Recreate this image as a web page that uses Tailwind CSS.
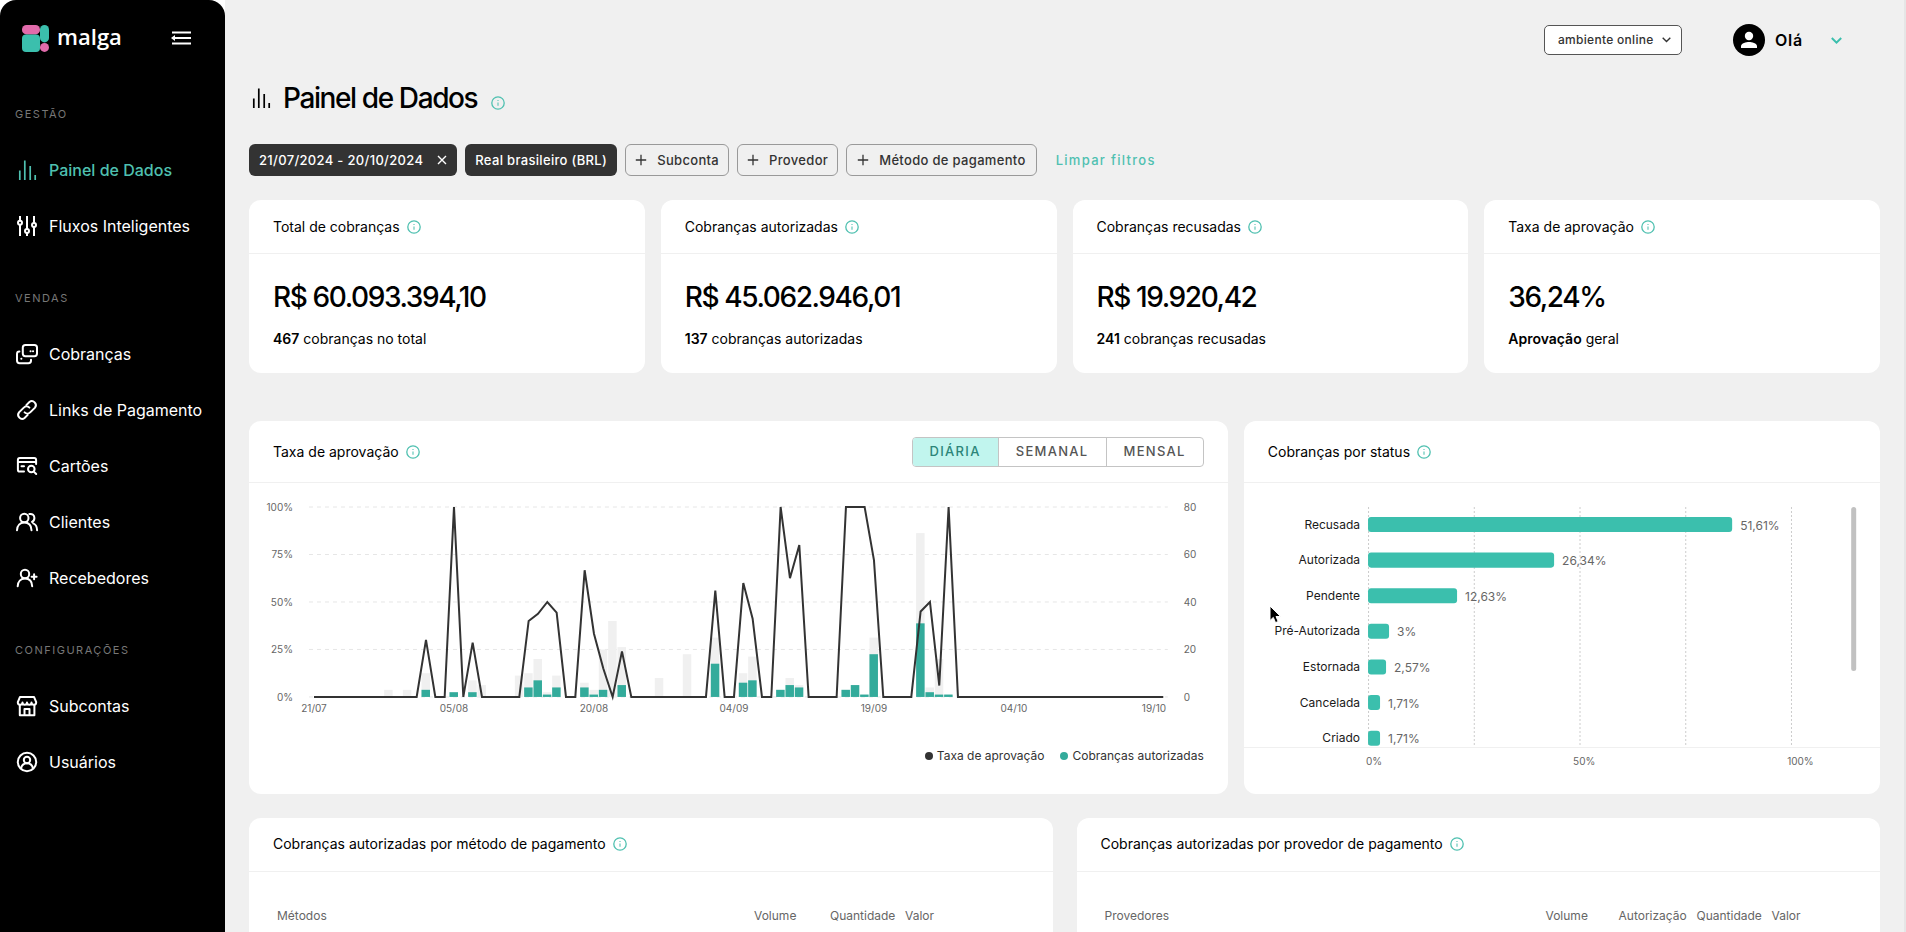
<!doctype html>
<html lang="pt-BR">
    <head>
        <meta charset="UTF-8" />
        <meta name="viewport" content="width=device-width, initial-scale=1.0" />
        <script src="https://cdn.jsdelivr.net/npm/@tailwindcss/browser@4"></script>
        <title>Painel de Dados - malga</title>
    </head>
    <body class="h-screen overflow-hidden bg-white font-['Inter',sans-serif] text-sm text-black flex">
        <!-- shared symbols -->
        <svg class="hidden">
            <symbol id="info" viewBox="0 0 14 14">
                <circle cx="7" cy="7" r="6.2" fill="none" stroke="currentColor" stroke-width="1.3" />
                <path d="M7 6.4v3.4M7 4v1.1" stroke="currentColor" stroke-width="1.3" opacity=".8" />
            </symbol>
            <symbol id="bars" viewBox="0 0 24 24">
                <path d="M4.8 12.5V22M9.8 2.5V22M15.2 8v14M20.2 17v5" stroke="currentColor" stroke-width="1.7" />
            </symbol>
            <symbol id="plus" viewBox="0 0 12 12">
                <path d="M6 .8v10.4M.8 6h10.4" stroke="currentColor" stroke-width="1.3" />
            </symbol>
        </svg>

        <aside class="w-[225px] shrink-0 bg-black text-white rounded-t-2xl px-[15px]">
            <div class="h-[86px] pt-5 flex items-start justify-between pl-[7px] pr-[18px]">
                <a href="#" class="flex items-center gap-2 h-9">
                    <svg class="size-[27px]" viewBox="0 0 27 27">
                        <rect width="18" height="9.4" rx="4.5" fill="#e16bab" />
                        <rect y="9.4" width="18" height="17.6" rx="4" fill="#3bbfad" />
                        <rect x="18" width="9" height="17.4" rx="4.5" fill="#3bbfad" />
                        <circle cx="22.5" cy="22.4" r="4.5" fill="#e16bab" />
                    </svg>
                    <span class="font-['Open_Sans',sans-serif] font-semibold text-[22px] leading-7 pb-1">malga</span>
                </a>
                <button aria-label="Recolher menu" class="h-9">
                    <svg class="w-[22px] h-[14px]" viewBox="0 0 22 14" fill="none" stroke="#fff" stroke-width="2">
                        <path d="M2 1.6h19M4 7h17M2 12.4h19" />
                        <path d="M5 4L1 7l4 3z" fill="#fff" stroke="none" />
                    </svg>
                </button>
            </div>

            <nav>
                <h2 class="h-14 pt-5 text-[11px] leading-4 tracking-[1.5px] text-[#777]">GESTÃO</h2>
                <a href="#" class="h-14 flex items-center gap-[10px] text-base font-medium text-[#4fc0b0]">
                    <svg class="size-6"><use href="#bars" /></svg>
                    Painel de Dados
                </a>
                <a href="#" class="h-14 flex items-center gap-[10px] text-base">
                    <svg class="size-6" viewBox="0 0 24 24" fill="#000" stroke="#fff" stroke-width="2">
                        <path d="M5 2v20M12 2v20M19 2v20" />
                        <circle cx="5" cy="8.7" r="2" />
                        <circle cx="12" cy="17" r="2" />
                        <circle cx="19" cy="11" r="2" />
                    </svg>
                    Fluxos Inteligentes
                </a>

                <h2 class="h-[72px] pt-9 text-[11px] leading-4 tracking-[1.5px] text-[#777]">VENDAS</h2>
                <a href="#" class="h-14 flex items-center gap-[10px] text-base">
                    <svg class="size-6" viewBox="0 0 24 24" fill="none" stroke="#fff" stroke-width="2" stroke-linecap="round">
                        <rect x="7.8" y="2.9" width="14.2" height="11.3" rx="2.6" />
                        <path d="M4.4 9.6C2.8 9.6 2 10.4 2 12v6.6c0 1.7.9 2.6 2.6 2.6h8.8c1.6 0 2.6-.8 2.6-2.4v-1M15.5 9.3h.1M18 9.3h.1M6.3 16.8h.1" />
                    </svg>
                    Cobranças
                </a>
                <a href="#" class="h-14 flex items-center gap-[10px] text-base">
                    <svg class="size-6" viewBox="0 0 24 24" fill="none" stroke="#fff" stroke-width="2" stroke-linecap="round">
                        <path d="M9.6 14.4a4 4 0 0 0 5.6 0l4.8-4.8a4 4 0 0 0-5.6-5.6l-3.1 3.1" />
                        <path d="M14.4 9.6a4 4 0 0 0-5.6 0L4 14.4A4 4 0 0 0 9.6 20l3.1-3.1" />
                    </svg>
                    Links de Pagamento
                </a>
                <a href="#" class="h-14 flex items-center gap-[10px] text-base">
                    <svg class="size-6" viewBox="0 0 24 24" fill="none" stroke="#fff" stroke-width="2" stroke-linecap="round">
                        <path d="M9 17.6H4.8C3.6 17.6 2.9 16.9 2.9 15.7V6c0-1.2.7-2 1.9-2h14.4c1.2 0 1.9.8 1.9 2v4M3 8h18M6.5 12.2h2.5" />
                        <circle cx="16.3" cy="15" r="3.3" />
                        <path d="M18.8 17.6l2.4 2.4" />
                    </svg>
                    Cartões
                </a>
                <a href="#" class="h-14 flex items-center gap-[10px] text-base">
                    <svg class="size-6" viewBox="0 0 24 24" fill="none" stroke="#fff" stroke-width="2" stroke-linecap="round">
                        <circle cx="9.3" cy="8" r="4.2" />
                        <path d="M2 20.2c.2-4.6 3-7.6 7.3-7.6s7 3 7.2 7.6M14.3 4c3.2-.6 5.1 1.3 5.1 3.9 0 1.9-1 3.3-2.4 4M18.2 13.4c2.5 1 3.8 3.4 3.9 6.8" />
                    </svg>
                    Clientes
                </a>
                <a href="#" class="h-14 flex items-center gap-[10px] text-base">
                    <svg class="size-6" viewBox="0 0 24 24" fill="none" stroke="#fff" stroke-width="2" stroke-linecap="round">
                        <circle cx="10" cy="8" r="4.2" />
                        <path d="M2.7 20.2c.2-4.6 3-7.6 7.3-7.6s7 3 7.2 7.6M16.6 10.8h5M19.1 8.3v5" />
                    </svg>
                    Recebedores
                </a>

                <h2 class="h-[72px] pt-9 text-[11px] leading-4 tracking-[1.5px] text-[#777]">CONFIGURAÇÕES</h2>
                <a href="#" class="h-14 flex items-center gap-[10px] text-base">
                    <svg class="size-6" viewBox="0 0 24 24" fill="none" stroke="#fff" stroke-width="2" stroke-linejoin="round">
                        <path d="M4.8 10.5v10.7h14.6V10.5M9.5 21v-6h5v6" />
                        <path d="M5 2.9h14l2.2 5.3c0 1.6-1 2.5-2.4 2.5-1.3 0-2.2-.8-2.3-2.1-.1 1.3-1 2.1-2.2 2.1-1.3 0-2.2-.8-2.3-2.1-.1 1.3-1 2.1-2.3 2.1-1.2 0-2.1-.8-2.2-2.1-.1 1.3-1 2.1-2.3 2.1-1.4 0-2.4-.9-2.4-2.5z" />
                    </svg>
                    Subcontas
                </a>
                <a href="#" class="h-14 flex items-center gap-[10px] text-base">
                    <svg class="size-6" viewBox="0 0 24 24" fill="none" stroke="#fff" stroke-width="2">
                        <circle cx="12" cy="12" r="9.2" />
                        <circle cx="12" cy="10" r="3.2" />
                        <path d="M6 18.6c.6-3.4 2.9-5.4 6-5.4s5.4 2 6 5.4" />
                    </svg>
                    Usuários
                </a>
            </nav>
        </aside>

        <main class="flex-1 min-w-0 h-screen overflow-hidden bg-[#f0f0f0] border-r-2 border-[#e6e6e6] px-6 pt-6">
            <header class="h-8 flex items-center justify-end pr-[38px]">
                <div class="relative mr-[51px]">
                    <select
                        aria-label="Ambiente"
                        class="appearance-none block w-[138px] h-[30px] py-0 pl-[13px] rounded-[5px] border border-[#555] bg-white text-xs leading-5 font-medium tracking-wide text-[#333]"
                    >
                        <option>ambiente online</option>
                    </select>
                    <svg class="absolute right-[11px] top-3 w-[9px] h-[6px] pointer-events-none" viewBox="0 0 9 6" fill="none" stroke="#333" stroke-width="1.4">
                        <path d="M.7.8l3.8 3.8L8.3.8" />
                    </svg>
                </div>
                <button class="flex items-center">
                    <svg class="size-8 mr-[10px]" viewBox="0 0 32 32">
                        <circle cx="16" cy="16" r="16" />
                        <circle cx="16" cy="12" r="4.2" fill="#fff" />
                        <path d="M8 24v-2c0-2.7 5.3-4.1 8-4.1s8 1.4 8 4.1v2z" fill="#fff" />
                    </svg>
                    <span class="text-base font-semibold tracking-wider mr-7">Olá</span>
                    <svg class="w-[11px] h-[7px]" viewBox="0 0 11 7" fill="none" stroke="#3bbfad" stroke-width="2">
                        <path d="M.8 1l4.7 4.6L10.2 1" />
                    </svg>
                </button>
            </header>

            <div class="mt-6 h-9 flex items-center">
                <svg class="size-6 mr-[10px]"><use href="#bars" /></svg>
                <h1 class="text-[28px] leading-9 font-medium tracking-tighter">Painel de Dados</h1>
                <svg class="size-[14px] ml-[14px] mt-[10px] text-[#4fc0b0]"><use href="#info" /></svg>
            </div>

            <div class="mt-7 h-8 flex items-stretch gap-2 text-[13px] font-medium tracking-wide text-[#333]">
                <button class="flex items-center rounded-md bg-[#333] text-white px-[10px]">
                    21/07/2024 - 20/10/2024
                    <svg class="size-[10px] ml-[14px]" viewBox="0 0 10 10" stroke="#fff" stroke-width="1.4">
                        <path d="M1 1l8 8M9 1l-8 8" />
                    </svg>
                </button>
                <button class="rounded-md bg-[#333] text-white px-[10px]">Real brasileiro (BRL)</button>
                <button class="flex items-center gap-[10px] rounded-md border border-[#999] px-[9px]">
                    <svg class="size-3"><use href="#plus" /></svg>
                    Subconta
                </button>
                <button class="flex items-center gap-[10px] rounded-md border border-[#999] px-[9px]">
                    <svg class="size-3"><use href="#plus" /></svg>
                    Provedor
                </button>
                <button class="flex items-center gap-[10px] rounded-md border border-[#999] px-[10px]">
                    <svg class="size-3"><use href="#plus" /></svg>
                    Método de pagamento
                </button>
                <button class="px-[11px] tracking-widest text-[#4fc0b0]">Limpar filtros</button>
            </div>

            <section class="mt-6 grid grid-cols-4 gap-4">
                <article class="rounded-xl bg-white">
                    <header class="h-[54px] px-6 flex items-center gap-[7px] border-b border-[#f0f0f0]">
                        <h2>Total de cobranças</h2>
                        <svg class="size-[14px] text-[#4fc0b0]"><use href="#info" /></svg>
                    </header>
                    <div class="p-6">
                        <p class="text-[28px] leading-[39px] font-medium tracking-tighter">R$ 60.093.394,10</p>
                        <p class="mt-3 leading-5"><b class="font-semibold">467</b> cobranças no total</p>
                    </div>
                </article>
                <article class="rounded-xl bg-white">
                    <header class="h-[54px] px-6 flex items-center gap-[7px] border-b border-[#f0f0f0]">
                        <h2>Cobranças autorizadas</h2>
                        <svg class="size-[14px] text-[#4fc0b0]"><use href="#info" /></svg>
                    </header>
                    <div class="p-6">
                        <p class="text-[28px] leading-[39px] font-medium tracking-tighter">R$ 45.062.946,01</p>
                        <p class="mt-3 leading-5"><b class="font-semibold">137</b> cobranças autorizadas</p>
                    </div>
                </article>
                <article class="rounded-xl bg-white">
                    <header class="h-[54px] px-6 flex items-center gap-[7px] border-b border-[#f0f0f0]">
                        <h2>Cobranças recusadas</h2>
                        <svg class="size-[14px] text-[#4fc0b0]"><use href="#info" /></svg>
                    </header>
                    <div class="p-6">
                        <p class="text-[28px] leading-[39px] font-medium tracking-tighter">R$ 19.920,42</p>
                        <p class="mt-3 leading-5"><b class="font-semibold">241</b> cobranças recusadas</p>
                    </div>
                </article>
                <article class="rounded-xl bg-white">
                    <header class="h-[54px] px-6 flex items-center gap-[7px] border-b border-[#f0f0f0]">
                        <h2>Taxa de aprovação</h2>
                        <svg class="size-[14px] text-[#4fc0b0]"><use href="#info" /></svg>
                    </header>
                    <div class="p-6">
                        <p class="text-[28px] leading-[39px] font-medium tracking-tighter">36,24%</p>
                        <p class="mt-3 leading-5"><b class="font-semibold">Aprovação</b> geral</p>
                    </div>
                </article>
            </section>

            <section class="mt-12 grid grid-cols-[20fr_13fr] gap-4">
                <article class="rounded-xl bg-white">
                    <header class="h-[62px] px-6 flex items-center gap-[7px] border-b border-[#f0f0f0]">
                        <h2>Taxa de aprovação</h2>
                        <svg class="size-[14px] text-[#4fc0b0]"><use href="#info" /></svg>
                        <div class="ml-auto h-[30px] flex rounded border border-[#c4c4c4] overflow-hidden text-[13px] font-medium tracking-widest text-[#555]">
                            <button class="px-[17px] bg-[#c1f5ee] text-[#2c8579]">DIÁRIA</button>
                            <button class="px-[17px] border-l border-[#c4c4c4]">SEMANAL</button>
                            <button class="px-[17px] border-l border-[#c4c4c4]">MENSAL</button>
                        </div>
                    </header>
                    <svg id="approval" class="w-full h-auto" viewBox="0 0 979 253"></svg>
                    <div class="mt-2 pb-[26px] px-6 flex justify-end gap-4 text-xs leading-6 text-[#333]">
                        <span class="flex items-center gap-1"><i class="size-2 rounded-full bg-[#333]"></i>Taxa de aprovação</span>
                        <span class="flex items-center gap-1"><i class="size-2 rounded-full bg-[#33ab9b]"></i>Cobranças autorizadas</span>
                    </div>
                </article>

                <article class="relative rounded-xl bg-white">
                    <header class="h-[62px] px-6 flex items-center gap-[7px] border-b border-[#f0f0f0]">
                        <h2>Cobranças por status</h2>
                        <svg class="size-[14px] text-[#4fc0b0]"><use href="#info" /></svg>
                    </header>
                    <svg id="status" class="w-full h-auto" viewBox="0 0 636 310"></svg>
                    <!-- mouse pointer -->
                    <svg class="absolute left-[25px] top-[184px] w-[13px] h-[20px]" viewBox="0 0 13 20">
                        <path d="M1 1v14.5l3.3-3.1 2.2 5.2 2.7-1.1-2.2-5h4.6z" stroke="#fff" />
                    </svg>
                </article>
            </section>

            <section class="mt-6 grid grid-cols-2 gap-6">
                <article class="rounded-xl bg-white h-[300px]">
                    <header class="h-[54px] px-6 flex items-center gap-[7px] border-b border-[#f0f0f0]">
                        <h2>Cobranças autorizadas por método de pagamento</h2>
                        <svg class="size-[14px] text-[#4fc0b0]"><use href="#info" /></svg>
                    </header>
                    <table class="mt-8 ml-7 w-[680px] table-fixed text-xs text-[#666]">
                        <thead>
                            <tr class="h-6 text-left">
                                <th class="font-normal">Métodos</th>
                                <th class="font-normal w-[76px]">Volume</th>
                                <th class="font-normal w-[75px]">Quantidade</th>
                                <th class="font-normal w-[52px]">Valor</th>
                            </tr>
                        </thead>
                    </table>
                </article>
                <article class="rounded-xl bg-white h-[300px]">
                    <header class="h-[54px] px-6 flex items-center gap-[7px] border-b border-[#f0f0f0]">
                        <h2>Cobranças autorizadas por provedor de pagamento</h2>
                        <svg class="size-[14px] text-[#4fc0b0]"><use href="#info" /></svg>
                    </header>
                    <table class="mt-8 ml-7 w-[720px] table-fixed text-xs text-[#666]">
                        <thead>
                            <tr class="h-6 text-left">
                                <th class="font-normal">Provedores</th>
                                <th class="font-normal w-[73px]">Volume</th>
                                <th class="font-normal w-[78px]">Autorização</th>
                                <th class="font-normal w-[75px]">Quantidade</th>
                                <th class="font-normal w-[53px]">Valor</th>
                            </tr>
                        </thead>
                    </table>
                </article>
            </section>
        </main>

        <script>
            // day index -> [total, authorized]
            const volume = {
                8: [3, 0], 10: [3, 0], 12: [10, 3], 15: [2, 2], 17: [7, 2], 18: [5, 0],
                22: [9, 0], 23: [10, 4], 24: [16, 7], 25: [2, 1], 26: [9, 4],
                29: [6, 4], 30: [3, 1], 31: [20, 3], 32: [32, 0], 33: [21, 5],
                37: [8, 0], 40: [18, 0], 43: [25, 14], 46: [10, 6], 47: [17, 7],
                50: [3, 3], 51: [8, 5], 52: [5, 4], 57: [3, 3], 58: [5, 5], 59: [1, 1],
                60: [25, 18], 65: [69, 31], 66: [4, 2], 67: [16, 1], 68: [1, 1],
            };
            // day index -> approval rate
            const rate = {
                12: 30, 15: 100, 17: 28.6, 23: 40, 24: 43.75, 25: 50, 26: 44.4,
                29: 66.7, 30: 33.3, 31: 15, 33: 24, 43: 56, 46: 60, 47: 41.2,
                50: 100, 51: 62.5, 52: 80, 57: 100, 58: 100, 59: 100, 60: 72,
                65: 45, 66: 50, 67: 6, 68: 100,
            };

            const left = 65;
            const step = 9.335;
            const base = 214;
            const height = 190;

            let out = "";
            for (let i = 0; i <= 4; i++) {
                const y = base - (height / 4) * i;
                out += `<path d="M60 ${y}H919" stroke="#e6e6e6" stroke-dasharray="4 4"/>`;
                out += `<text x="44" y="${y + 4}" text-anchor="end">${i * 25}%</text>`;
                out += `<text x="935" y="${y + 4}">${i * 20}</text>`;
            }
            for (const day in volume) {
                const x = left + step * day - 4.5;
                const [total, ok] = volume[day].map((n) => (n * height) / 80);
                out += `<rect x="${x}" y="${base - total}" width="8.5" height="${total}" fill="#f0f0f0"/>`;
                out += `<rect x="${x}" y="${base - ok}" width="8.5" height="${ok}" fill="#33ab9b"/>`;
            }
            const points = [];
            for (let i = 0; i < 92; i++) {
                points.push(`${left + step * i},${base - ((rate[i] || 0) * height) / 100}`);
            }
            out += `<polyline points="${points.join(" ")}" fill="none" stroke="#333" stroke-width="2"/>`;
            ["21/07", "05/08", "20/08", "04/09", "19/09", "04/10", "19/10"].forEach((label, i) => {
                out += `<text x="${left + step * 15 * i}" y="229" text-anchor="middle">${label}</text>`;
            });
            document.getElementById("approval").innerHTML = `<g font-size="10" fill="#666">${out}</g>`;

            const statuses = [
                ["Recusada", "51,61%", 364],
                ["Autorizada", "26,34%", 186],
                ["Pendente", "12,63%", 89],
                ["Pré-Autorizada", "3%", 21],
                ["Estornada", "2,57%", 18],
                ["Cancelada", "1,71%", 12],
                ["Criado", "1,71%", 12],
            ];
            let st = "";
            for (let i = 0; i <= 4; i++) {
                const x = 124.5 + 105.7 * i;
                st += `<path d="M${x} 24V262" stroke="#ccc" stroke-dasharray="2 2"/>`;
            }
            statuses.forEach(([name, pct, w], i) => {
                const y = 41.5 + 35.6 * i;
                st += `<text x="116" y="${y + 4}" text-anchor="end" fill="#1a1a1a">${name}</text>`;
                st += `<rect x="124" y="${y - 7.5}" width="${w}" height="15" rx="3" fill="#3bbfad"/>`;
                st += `<text x="${132 + w}" y="${y + 5}" fill="#666">${pct}</text>`;
            });
            st += `<path d="M0 264.5H636" stroke="#f0f0f0"/>`;
            st += `<rect x="607" y="24" width="5" height="164" rx="2.5" fill="#c1c1c1"/>`;
            st += `<g font-size="10" fill="#666"><text x="122" y="282">0%</text><text x="329" y="282">50%</text><text x="543" y="282">100%</text></g>`;
            document.getElementById("status").innerHTML = `<g font-size="12">${st}</g>`;
        </script>
    </body>
</html>
